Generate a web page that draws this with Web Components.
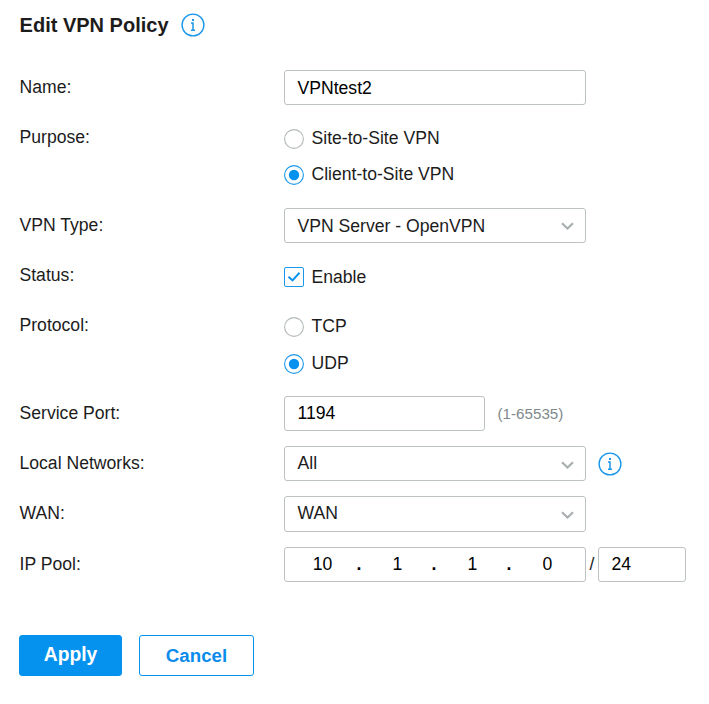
<!DOCTYPE html>
<html lang="en">
<head>
<meta charset="utf-8">
<title>Edit VPN Policy</title>
<style>
    body {
        margin: 0;
        background: #fff;
        color: #1c1c1c;
        font: 17.6px/20px "Liberation Sans", Arial, sans-serif;
    }
</style>
</head>
<body>
<vpn-policy-form></vpn-policy-form>

<script>
/**
 * Blue "i" inside a circle
 */
class InfoIcon extends HTMLElement {
    constructor() {
        super();
        this.root = this.attachShadow({ mode: 'open' });
    }

    connectedCallback() {
        this.root.innerHTML = /*html*/ `
            <style>
                :host { display: block; width: 24px; height: 24px; flex: none; }
                svg { display: block; }
            </style>
            <svg width="24" height="24" viewBox="0 0 24 24" fill="none" stroke="#1a97ea">
                <circle cx="12" cy="12" r="10.9" stroke-width="1.4"/>
                <path d="M10 9.9h2v7.7M10 17.3h4" stroke-width="1.5"/>
                <path d="M11 7h2" stroke-width="2"/>
            </svg>
        `;
    }
}

/**
 * Label on the left, controls in the slot
 * @property {string} label
 */
class FormRow extends HTMLElement {
    constructor() {
        super();
        this.root = this.attachShadow({ mode: 'open' });
    }

    connectedCallback() {
        this.root.innerHTML = /*html*/ `
            <style>
                :host { display: flex; align-items: flex-start; min-height: 35.3px; }
                .label { box-sizing: border-box; width: 265px; padding-left: .5px; flex: none; line-height: 34px; }
                .content { display: flex; align-items: center; min-height: 35.3px; }
                :host([stacked]) .content { flex-direction: column; align-items: flex-start; }
            </style>
            <div class="label">${this.getAttribute('label')}</div>
            <div class="content"><slot></slot></div>
        `;
    }
}

/**
 * Bordered box, used for text inputs
 * @property {string} width
 */
class TextField extends HTMLElement {
    constructor() {
        super();
        this.root = this.attachShadow({ mode: 'open' });
    }

    connectedCallback() {
        this.root.innerHTML = /*html*/ `
            <style>
                :host {
                    display: flex;
                    box-sizing: border-box;
                    width: ${this.getAttribute('width') || 302}px;
                    height: 35.3px;
                    padding: 0 12.5px;
                    line-height: var(--field-line, 34px);
                    border: 1px solid #bcc1c2;
                    border-radius: 3px;
                    color: #000;
                }
            </style>
            <slot></slot>
        `;
    }
}

class SelectField extends HTMLElement {
    constructor() {
        super();
        this.root = this.attachShadow({ mode: 'open' });
    }

    connectedCallback() {
        this.root.innerHTML = /*html*/ `
            <style>
                :host {
                    display: flex;
                    align-items: flex-start;
                    justify-content: space-between;
                    box-sizing: border-box;
                    width: 302px;
                    height: 35.3px;
                    padding: 0 11px 0 12.5px;
                    line-height: var(--field-line, 34px);
                    border: 1px solid #bcc1c2;
                    border-radius: 3px;
                }
                svg { align-self: center; margin-top: 2.6px; }
            </style>
            <span><slot></slot></span>
            <svg width="13" height="9" viewBox="0 0 13 9" fill="none" stroke="#a9afb1" stroke-width="2.2">
                <path d="M1 1.2l5.5 5.3L12 1.2"/>
            </svg>
        `;
    }
}

/**
 * Radio or checkbox with its text
 * @property {string} type radio | checkbox
 * @property {boolean} checked
 */
class CheckOption extends HTMLElement {
    constructor() {
        super();
        this.root = this.attachShadow({ mode: 'open' });
    }

    /**
     * @return {string}
     */
    mark() {
        const checked = this.hasAttribute('checked');
        const color = checked ? '#1a97ea' : '#b4b9ba';
        if (this.getAttribute('type') === 'checkbox') {
            return `
                <rect x=".5" y=".5" width="19" height="19" rx="1.5" stroke="${color}"/>
                ${checked ? '<path d="M4.5 9.7l4 3.7 7-7.6" stroke="#0b93ee" stroke-width="2"/>' : ''}
            `;
        }
        return `
            <circle cx="10" cy="10" r="9.4" stroke="${color}" stroke-width="1.1"/>
            ${checked ? '<circle cx="10" cy="10" r="5.2" fill="#0492ee"/>' : ''}
        `;
    }

    connectedCallback() {
        this.root.innerHTML = /*html*/ `
            <style>
                :host { display: flex; height: 36.3px; line-height: 36px; }
                :host([type=checkbox]) { height: 35.3px; line-height: 38px; }
                svg { flex: none; margin: 9px 7.5px 0 0; }
            </style>
            <svg width="20" height="20" viewBox="0 0 20 20" fill="none">${this.mark()}</svg>
            <span><slot></slot></span>
        `;
    }
}

/**
 * Four octets separated by dots
 * @property {string} value
 */
class IpField extends HTMLElement {
    constructor() {
        super();
        this.root = this.attachShadow({ mode: 'open' });
    }

    connectedCallback() {
        const octets = this.getAttribute('value').split('.');
        this.root.innerHTML = /*html*/ `
            <style>
                :host {
                    display: flex;
                    box-sizing: border-box;
                    width: 302px;
                    height: 35.3px;
                    padding-left: 4px;
                    line-height: var(--field-line, 34px);
                    border: 1px solid #bcc1c2;
                    border-radius: 3px;
                    color: #000;
                }
                span { width: 67px; text-align: center; }
                i { width: 8px; margin: 0 1px 0 -1px; font-style: normal; text-align: center; font-weight: bold; }
            </style>
            ${octets.map((octet) => `<span>${octet}</span>`).join('<i>.</i>')}
        `;
    }
}

/**
 * @property {boolean} primary
 * @property {string} width
 */
class ActionButton extends HTMLElement {
    constructor() {
        super();
        this.root = this.attachShadow({ mode: 'open' });
    }

    connectedCallback() {
        const primary = this.hasAttribute('primary');
        this.root.innerHTML = /*html*/ `
            <style>
                :host {
                    display: block;
                    box-sizing: border-box;
                    width: ${this.getAttribute('width')}px;
                    height: 41px;
                    border: 1px solid #0492ee;
                    border-radius: 3px;
                    background: ${primary ? '#0492ee' : '#fff'};
                    color: ${primary ? '#fff' : '#0c8cea'};
                    font-size: ${primary ? 19.3 : 18.7}px;
                    font-weight: bold;
                    line-height: ${primary ? 38 : 40}px;
                    text-align: center;
                }
            </style>
            <slot></slot>
        `;
    }
}

class VpnPolicyForm extends HTMLElement {
    constructor() {
        super();
        this.root = this.attachShadow({ mode: 'open' });
    }

    connectedCallback() {
        this.root.innerHTML = /*html*/ `
            <style>
                :host { display: block; padding: 13px 19px 0; }
                header { display: flex; align-items: center; height: 24px; gap: 12px; padding-left: .6px; }
                h1 { margin: 0; font-size: 20px; line-height: 24px; }
                .rows { display: grid; gap: 15px; margin-top: 32.8px; }
                .compact { --field-line: 33px; }
                .hint { margin-left: 12.5px; color: #80898c; font-size: 15.2px; }
                .slash { width: 12px; text-align: center; line-height: 34px; }
                info-icon.field { margin-left: 12px; }
                footer { display: flex; gap: 17px; margin-top: 53px; }
            </style>
            <header><h1>Edit VPN Policy</h1><info-icon></info-icon></header>
            <div class="rows">
                <form-row label="Name:"><text-field>VPNtest2</text-field></form-row>
                <form-row label="Purpose:" stacked>
                    <check-option type="radio">Site-to-Site VPN</check-option>
                    <check-option type="radio" checked>Client-to-Site VPN</check-option>
                </form-row>
                <form-row label="VPN Type:"><select-field>VPN Server - OpenVPN</select-field></form-row>
                <form-row label="Status:"><check-option type="checkbox" checked>Enable</check-option></form-row>
                <form-row label="Protocol:" stacked>
                    <check-option type="radio">TCP</check-option>
                    <check-option type="radio" checked>UDP</check-option>
                </form-row>
                <form-row class="compact" label="Service Port:">
                    <text-field width="201">1194</text-field><span class="hint">(1-65535)</span>
                </form-row>
                <form-row class="compact" label="Local Networks:">
                    <select-field>All</select-field><info-icon class="field"></info-icon>
                </form-row>
                <form-row class="compact" label="WAN:"><select-field>WAN</select-field></form-row>
                <form-row class="compact" label="IP Pool:">
                    <ip-field value="10.1.1.0"></ip-field><span class="slash">/</span><text-field width="88">24</text-field>
                </form-row>
            </div>
            <footer>
                <action-button primary width="103">Apply</action-button>
                <action-button width="115">Cancel</action-button>
            </footer>
        `;
    }
}

customElements.define('info-icon', InfoIcon);
customElements.define('form-row', FormRow);
customElements.define('text-field', TextField);
customElements.define('select-field', SelectField);
customElements.define('check-option', CheckOption);
customElements.define('ip-field', IpField);
customElements.define('action-button', ActionButton);
customElements.define('vpn-policy-form', VpnPolicyForm);
</script>
</body>
</html>
